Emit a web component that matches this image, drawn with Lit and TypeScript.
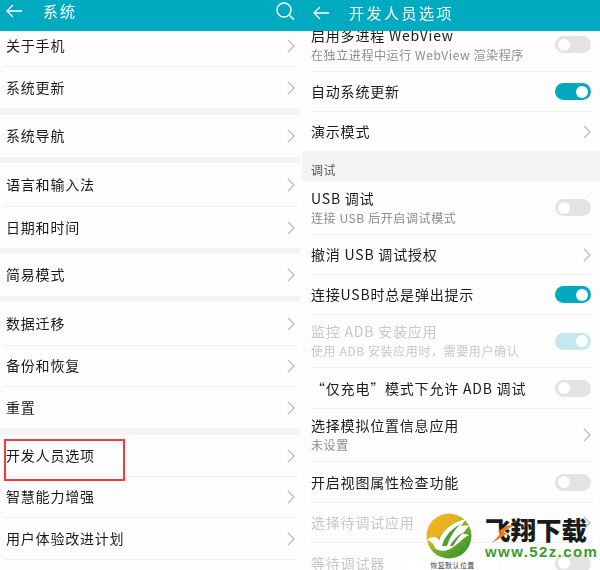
import { LitElement, html, css, svg } from "lit";
import { customElement } from "lit/decorators.js";

type Row = { t?: string; s?: string; h: number; line?: boolean; kind?: "chev" | "off" | "on" | "dim"; dim?: boolean; band?: boolean };

const leftRows: Row[] = [
  { t: "关于手机", h: 41, line: true, kind: "chev" },
  { t: "系统更新", h: 41, kind: "chev" },
  { band: true, h: 7 },
  { t: "系统导航", h: 42, kind: "chev" },
  { band: true, h: 6 },
  { t: "语言和输入法", h: 44, line: true, kind: "chev" },
  { t: "日期和时间", h: 41, kind: "chev" },
  { band: true, h: 6 },
  { t: "简易模式", h: 42, kind: "chev" },
  { band: true, h: 6 },
  { t: "数据迁移", h: 44, line: true, kind: "chev" },
  { t: "备份和恢复", h: 41, line: true, kind: "chev" },
  { t: "重置", h: 41, kind: "chev" },
  { band: true, h: 7 },
  { t: "开发人员选项", h: 42, line: true, kind: "chev" },
  { t: "智慧能力增强", h: 41, line: true, kind: "chev" },
  { t: "用户体验改进计划", h: 42, line: true, kind: "chev" },
];

const rightRows: Row[] = [
  { t: "启用多进程 WebView", s: "在独立进程中运行 WebView 渲染程序", h: 54, line: true, kind: "off" },
  { t: "自动系统更新", h: 40, line: true, kind: "on" },
  { t: "演示模式", h: 39, kind: "chev" },
  { band: true, t: "调试", h: 30 },
  { t: "USB 调试", s: "连接 USB 后开启调试模式", h: 54, line: true, kind: "off" },
  { t: "撤消 USB 调试授权", h: 40, line: true, kind: "chev" },
  { t: "连接USB时总是弹出提示", h: 40, line: true, kind: "on" },
  { t: "监控 ADB 安装应用", s: "使用 ADB 安装应用时，需要用户确认", h: 53, line: true, kind: "dim", dim: true },
  { t: "“仅充电”模式下允许 ADB 调试", h: 41, line: true, kind: "off" },
  { t: "选择模拟位置信息应用", s: "未设置", h: 53, line: true, kind: "chev" },
  { t: "开启视图属性检查功能", h: 41, line: true, kind: "off" },
  { t: "选择待调试应用", h: 40, line: true, kind: "chev", dim: true },
  { t: "等待调试器", h: 40, kind: "off", dim: true },
];

const chevron = html`<svg class="chev" viewBox="0 0 8 14"><path d="M1 1l6 6-6 6" fill="none" stroke="#bdbdbd" stroke-width="1.3"/></svg>`;
const arrow = html`<svg class="arrow" viewBox="0 0 16 14"><path d="M16 7H1M7 1L1 7l6 6" fill="none" stroke="#fff" stroke-width="1.3"/></svg>`;
const search = html`<svg class="search" viewBox="0 0 19 18"><circle cx="8" cy="8" r="7" fill="none" stroke="#fff" stroke-width="1.4"/><path d="M13 13l5 4.5" stroke="#fff" stroke-width="1.5"/></svg>`;

const logo = svg`<svg class="logo" viewBox="0 0 46 46">
  <defs><linearGradient id="lg" x1="0.1" y1="0.1" x2="0.75" y2="0.85">
    <stop offset="0" stop-color="#f8b31a"/><stop offset="0.38" stop-color="#e3b322"/><stop offset="0.6" stop-color="#7fae2c"/><stop offset="1" stop-color="#4a9a2e"/></linearGradient></defs>
  <circle cx="23" cy="23" r="22.5" fill="url(#lg)"/>
  <path d="M1 27c3-3 7-4 10-2 1 1 2 2 2 3 3-10 13-19 27-22-2 3-4 5-5 7 3-1 6-1 8 0-2 2-5 5-6 8 2 0 4 0 6 1-7 3-11 10-19 14-6 3-12 2-15-1-1-4-4-7-8-8z" fill="#fff"/>
  <path d="M16 33c2-9 9-17 19-22-7 6-11 13-14 22z" fill="#4f9e33"/>
  <path d="M24 33c3-6 8-11 14-14-5 4-8 9-11 14z" fill="#4f9e33"/>
</svg>`;

@customElement("app-root")
export class AppRoot extends LitElement {
  static styles = css`
    :host { display: block; width: 600px; height: 570px; overflow: hidden; position: relative; background: #fdfdfd;
      font-family: "Noto Sans CJK SC", "Liberation Sans", sans-serif; color: #1a1a1a; }
    .screen { display: flex; height: 570px; filter: blur(0.35px); }
    .panel { width: 300px; height: 570px; overflow: hidden; display: flex; flex-direction: column; }
    .bar { flex: none; height: 31px; background: #00abc1; color: #fff; display: flex; align-items: center; position: relative; z-index: 1; box-sizing: border-box; }
    .bar.l { padding: 0 5px 10px 6px; }
    .bar.r { padding: 0 0 6px 13px; }
    .arrow { width: 16px; height: 14px; flex: none; }
    .search { width: 19px; height: 18px; margin-left: auto; }
    .title { font-size: 15px; line-height: 20px; }
    .l .title { margin-left: 21px; letter-spacing: 2px; }
    .r .title { margin-left: 20px; letter-spacing: 2.5px; }
    .list { flex: none; }
    .left .list { margin-top: -5px; }
    .right .list { margin-top: -13px; }
    .row { display: flex; align-items: center; box-sizing: border-box; }
    .left .row { margin: 0 3px 0 4px; padding: 0 2px 0 2px; }
    .left .text { margin-top: -1px; }
    .right .row { margin: 0 7px 0 11px; padding-right: 2px; }
    .line { border-bottom: 1px solid #f0f0f0; }
    .band { background: #f4f4f4; }
    .left .row.band { margin: 0; padding: 0; }
    .right .row.band { margin: 0 0 0 2px; padding: 7px 0 0 9px; font-size: 12px; color: #555; letter-spacing: 0.5px; }
    .text { flex: 1; min-width: 0; display: flex; flex-direction: column; }
    .t { font-size: 14px; line-height: 19px; letter-spacing: 0.8px; white-space: nowrap; }
    .s { font-size: 12px; line-height: 19px; letter-spacing: 0.6px; color: #8c8c8c; white-space: nowrap; }
    .dim .t, .dim .s { color: #c8c8c8; }
    .chev { width: 8px; height: 14px; flex: none; }
    .tg { width: 36px; height: 17px; border-radius: 9px; background: #e3e3e3; flex: none; display: flex; align-items: center; padding: 0 3px; box-sizing: border-box; }
    .tg i { width: 12px; height: 12px; border-radius: 50%; background: #fff; }
    .tg.on { background: #00a9bf; justify-content: flex-end; }
    .tg.dimt { background: #c5e8ee; justify-content: flex-end; }
    .redbox { position: absolute; left: 4px; top: 439px; width: 121px; height: 42px; border: 2px solid #ee3b3f; box-sizing: border-box; }
    .cloud { position: absolute; left: 407px; top: 540px; width: 91px; height: 52px; border-radius: 50%; background: #fff; display: flex; justify-content: center; padding-top: 20px; box-sizing: border-box; font-size: 7px; line-height: 10px; color: #444; letter-spacing: 0.4px; }
    .logo { position: absolute; left: 426px; top: 513px; width: 46px; height: 46px; }
    .brand { position: absolute; left: 485px; top: 514px; width: 106px; display: flex; flex-direction: column; }
    .cn { font-size: 25.5px; line-height: 30px; font-weight: 900; color: #1b1b1b; letter-spacing: 0; white-space: nowrap; }
    .url { font-family: "Liberation Sans", sans-serif; font-size: 15px; line-height: 15px; font-weight: 700; color: #3f9a2c; letter-spacing: 1.4px; white-space: nowrap; }
    .bolt { position: absolute; left: 492px; top: 525px; width: 22px; height: 18px; }
  `;

  private rowView(r: Row) {
    if (r.band) return html`<div class="row band" style="height:${r.h}px">${r.t ?? ""}</div>`;
    const end = r.kind === "chev" ? chevron
      : html`<span class="tg ${r.kind === "on" ? "on" : r.kind === "dim" ? "dimt" : ""}"><i></i></span>`;
    return html`<div class="row ${r.line ? "line" : ""} ${r.dim ? "dim" : ""}" style="height:${r.h}px">
      <div class="text"><span class="t">${r.t}</span>${r.s ? html`<span class="s">${r.s}</span>` : ""}</div>${end}
    </div>`;
  }

  render() {
    return html`
      <div class="screen">
        <section class="panel left">
          <header class="bar l">${arrow}<span class="title">系统</span>${search}</header>
          <div class="list">${leftRows.map((r) => this.rowView(r))}</div>
        </section>
        <section class="panel right">
          <header class="bar r">${arrow}<span class="title">开发人员选项</span></header>
          <div class="list">${rightRows.map((r) => this.rowView(r))}</div>
        </section>
      </div>
      <div class="redbox"></div>
      <div class="cloud">恢复默认位置</div>
      ${logo}
      <div class="brand"><span class="cn">飞翔下载</span><span class="url">www.52z.com</span></div>
      <svg class="bolt" viewBox="0 0 22 18"><path d="M22 0L11 7.5l4.5 1L0 18l9-10-3.500-1L14 1z" fill="#f0781e"/></svg>
    `;
  }
}
